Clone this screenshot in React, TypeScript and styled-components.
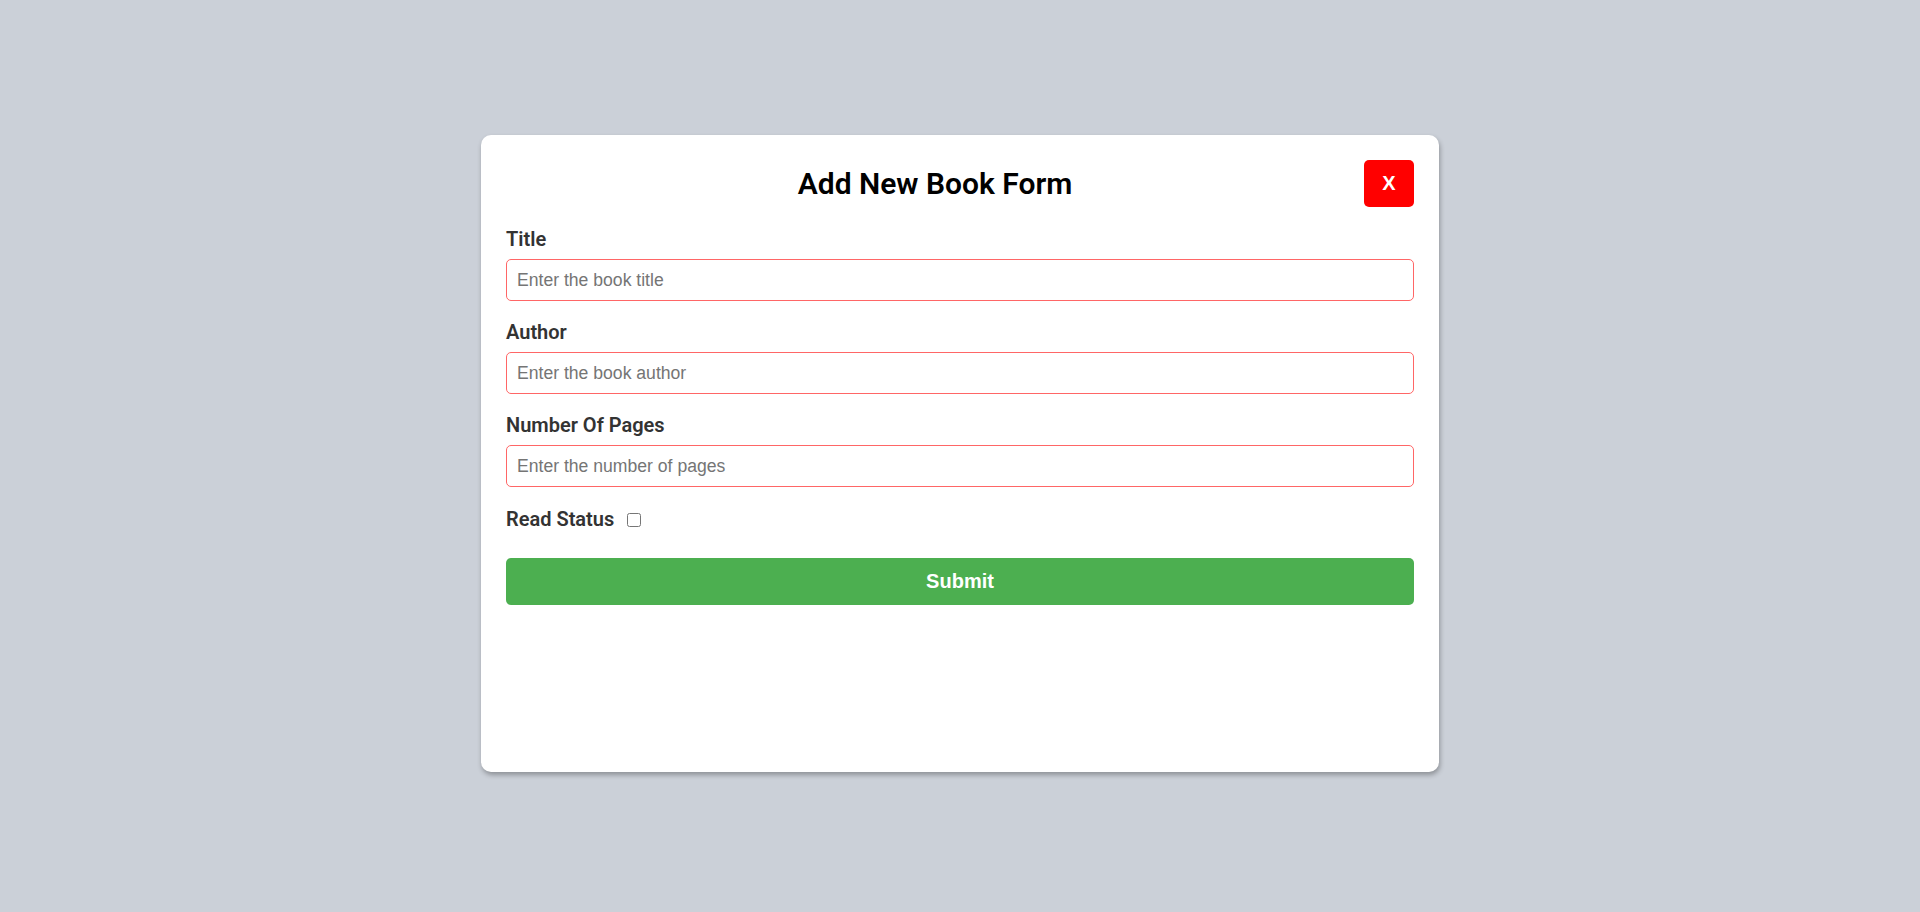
import React from "react";
import styled, { createGlobalStyle } from "styled-components";

const GlobalStyle = createGlobalStyle`
  * { box-sizing: border-box; }
  html, body { margin: 0; padding: 0; }
  body {
    background: #cbd0d8;
    font-family: Roboto, "Liberation Sans", Arial, sans-serif;
  }
`;

const Page = styled.div`
  min-height: 100vh;
  display: flex;
  justify-content: center;
  align-items: flex-start;
  padding-top: 135px;
`;

const Modal = styled.div`
  width: 958px;
  height: 637px;
  background: #ffffff;
  border-radius: 10px;
  box-shadow: 1px 3px 5px rgba(0, 0, 0, 0.3);
  padding: 25px;
`;

const Header = styled.div`
  display: flex;
  align-items: center;
  margin-bottom: 21px;
`;

const Heading = styled.h1`
  flex: 1;
  margin: 0;
  text-align: center;
  font-family: Roboto, sans-serif;
  font-size: 30px;
  font-weight: 600;
  color: #000;
`;

const CloseButton = styled.button`
  width: 50px;
  height: 47px;
  border: none;
  border-radius: 5px;
  background: #ff0000;
  color: #fff;
  font-family: "Liberation Sans", Arial, sans-serif;
  font-weight: 700;
  font-size: 20px;
  padding: 0;
  cursor: pointer;
`;

const Form = styled.form`
  display: flex;
  flex-direction: column;
`;

const Field = styled.div`
  display: flex;
  flex-direction: column;
  margin-bottom: 20px;
`;

const Label = styled.label`
  font-family: Roboto, sans-serif;
  font-size: 20px;
  line-height: 23px;
  font-weight: 600;
  color: #333;
  margin-bottom: 8px;
`;

const Input = styled.input`
  width: 100%;
  height: 42px;
  padding: 10px;
  border: 1px solid #ff6666;
  border-radius: 5px;
  font-family: "Liberation Sans", Arial, sans-serif;
  font-size: 17.6px;
  color: #333;
  outline: none;
  &::placeholder {
    color: #757575;
  }
`;

const CheckRow = styled.div`
  display: flex;
  align-items: center;
  gap: 10px;
  margin-top: 1px;
  margin-bottom: 27px;
`;

const InlineLabel = styled(Label)`
  margin-bottom: 0;
`;

const Checkbox = styled.input`
  width: 14px;
  height: 14px;
  margin: 0 0 0 3px;
`;

const SubmitButton = styled.button`
  width: 100%;
  height: 47px;
  border: none;
  border-radius: 5px;
  background: #4caf50;
  color: #fff;
  font-family: "Liberation Sans", Arial, sans-serif;
  font-size: 20px;
  font-weight: 700;
  cursor: pointer;
`;

export default function App() {
  return (
    <>
      <GlobalStyle />
      <Page>
        <Modal>
          <Header>
            <Heading>Add New Book Form</Heading>
            <CloseButton type="button">X</CloseButton>
          </Header>
          <Form onSubmit={(e) => e.preventDefault()}>
            <Field>
              <Label htmlFor="title">Title</Label>
              <Input id="title" type="text" placeholder="Enter the book title" />
            </Field>
            <Field>
              <Label htmlFor="author">Author</Label>
              <Input id="author" type="text" placeholder="Enter the book author" />
            </Field>
            <Field>
              <Label htmlFor="pages">Number Of Pages</Label>
              <Input id="pages" type="number" placeholder="Enter the number of pages" />
            </Field>
            <CheckRow>
              <InlineLabel htmlFor="read">Read Status</InlineLabel>
              <Checkbox id="read" type="checkbox" />
            </CheckRow>
            <SubmitButton type="submit">Submit</SubmitButton>
          </Form>
        </Modal>
      </Page>
    </>
  );
}
